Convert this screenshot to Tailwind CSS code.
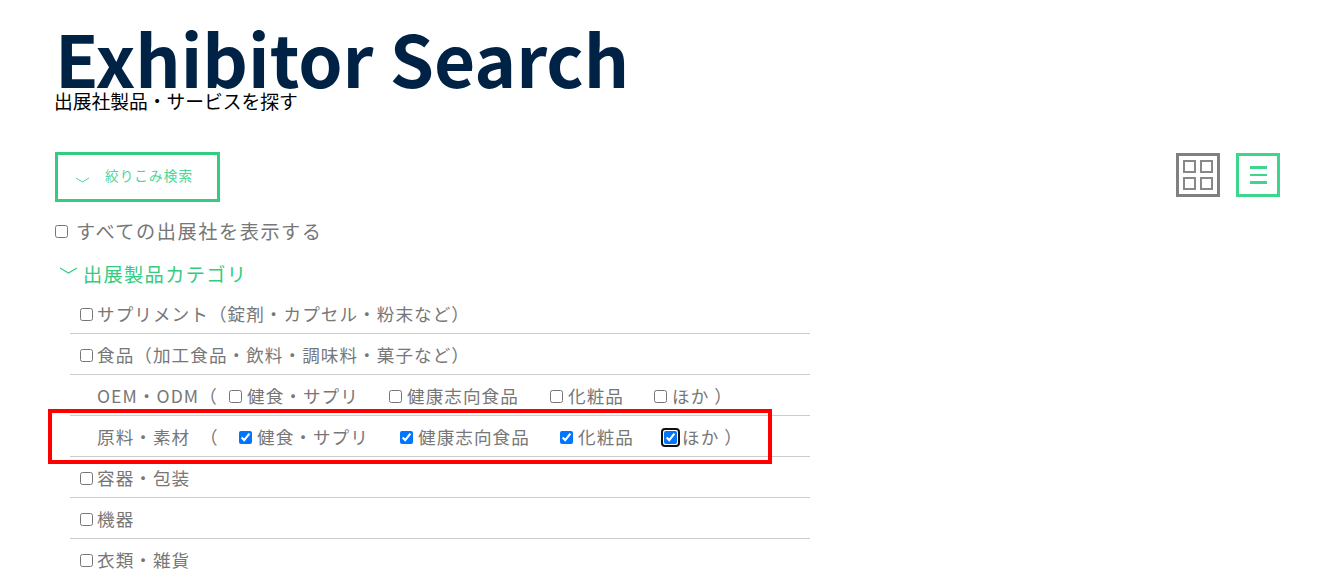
<!DOCTYPE html>
<html lang="ja">
<head>
  <meta charset="UTF-8" />
  <meta name="viewport" content="width=device-width, initial-scale=1.0" />
  <script src="https://cdn.jsdelivr.net/npm/@tailwindcss/browser@4"></script>
  <title>Exhibitor Search</title>
</head>
<body class="bg-white h-[578px] overflow-hidden font-['Noto_Sans_CJK_JP','Noto_Sans',sans-serif] text-[#777]">
  <div class="pl-[55px] pr-[63px]">
    <!-- Heading -->
    <h1 class="pt-[11px] h-[90px] text-[71px] leading-[92px] font-bold text-[#002345]">Exhibitor Search</h1>
    <p class="-ml-[1px] text-[18.75px] leading-[22px] text-black">出展社製品・サービスを探す</p>

    <!-- Toolbar -->
    <div class="mt-[40px] flex items-start justify-between">
      <button class="w-[165px] h-[50px] border-[3px] border-[#33cc80] flex items-center pl-[17px] text-[#4fd596] text-[13.6px] tracking-[0.08em]">
        <svg class="mt-[5px]" width="15" height="6" viewBox="0 0 15 6" fill="none" stroke="#4fd596" stroke-width="1"><path d="M1 1l6.5 4L14 1" /></svg>
        <span class="ml-[15px] mb-[4px]">絞りこみ検索</span>
      </button>
      <div class="mt-[1px] flex gap-[16px]">
        <div class="w-[44px] h-[44px] border-[3px] border-[#808080] grid grid-cols-2 gap-[4px] p-[4px]">
          <span class="border-2 border-[#888]"></span>
          <span class="border-2 border-[#888]"></span>
          <span class="border-2 border-[#888]"></span>
          <span class="border-2 border-[#888]"></span>
        </div>
        <div class="w-[44px] h-[44px] border-[3px] border-[#3dd68c] flex flex-col items-center justify-center gap-[5px]">
          <span class="w-[17px] h-[2.5px] bg-[#3dd68c]"></span>
          <span class="w-[17px] h-[2.5px] bg-[#3dd68c]"></span>
          <span class="w-[17px] h-[2.5px] bg-[#3dd68c]"></span>
        </div>
      </div>
    </div>

    <label class="mt-[14px] flex items-center h-[30px] text-[19.2px] tracking-[0.08em]">
      <input type="checkbox" class="m-0 mr-[8px] w-[13px] h-[13px]" />すべての出展社を表示する
    </label>

    <div class="mt-[13px] flex items-center h-[30px] text-[#33cc80] text-[19.2px] tracking-[0.07em]">
      <svg class="ml-[4px] mr-[5px] mb-[6px]" width="19" height="8" viewBox="0 0 19 8" fill="none" stroke="#33cc80" stroke-width="1.2"><path d="M1 1l8.5 5L18 1" /></svg>
      出展製品カテゴリ
    </div>

    <!-- Category rows -->
    <ul class="mt-[4px] ml-[15px] w-[740px] text-[17.6px] tracking-[0.06em]">
      <li class="h-[41px] pt-[2px] border-b border-[#ccc] flex items-center pl-[10px]"><input type="checkbox" class="m-0 mr-[4px]" />サプリメント（錠剤・カプセル・粉末など）</li>
      <li class="h-[41px] pt-[2px] border-b border-[#ccc] flex items-center pl-[10px]"><input type="checkbox" class="m-0 mr-[4px]" />食品（加工食品・飲料・調味料・菓子など）</li>
      <li class="h-[41px] pt-[2px] border-b border-[#ccc] flex items-center pl-[27px]">
        <span class="w-[132px]">OEM・ODM（</span>
        <input type="checkbox" class="m-0 mr-[5px]" /><span class="w-[142px]">健食・サプリ</span>
        <input type="checkbox" class="m-0 mr-[5px]" /><span class="w-[143px]">健康志向食品</span>
        <input type="checkbox" class="m-0 mr-[5px]" /><span class="w-[86px]">化粧品</span>
        <input type="checkbox" class="m-0 mr-[5px]" /><span>ほか ）</span>
      </li>
      <li class="relative h-[41px] pt-[2px] border-b border-[#ccc] flex items-center pl-[27px]">
        <span class="w-[142px]">原料・素材　（</span>
        <input type="checkbox" checked class="m-0 mr-[5px]" /><span class="w-[143px]">健食・サプリ</span>
        <input type="checkbox" checked class="m-0 mr-[5px]" /><span class="w-[142px]">健康志向食品</span>
        <input type="checkbox" checked class="m-0 mr-[5px]" /><span class="w-[86px]">化粧品</span>
        <input type="checkbox" checked autofocus class="m-0 mr-[5px]" /><span>ほか ）</span>
        <div class="absolute left-[-22px] top-[-7px] w-[724px] h-[55px] border-4 border-[#f00]"></div>
      </li>
      <li class="h-[41px] pt-[2px] border-b border-[#ccc] flex items-center pl-[10px]"><input type="checkbox" class="m-0 mr-[4px]" />容器・包装</li>
      <li class="h-[41px] pt-[2px] border-b border-[#ccc] flex items-center pl-[10px]"><input type="checkbox" class="m-0 mr-[4px]" />機器</li>
      <li class="h-[41px] pt-[2px] flex items-center pl-[10px]"><input type="checkbox" class="m-0 mr-[4px]" />衣類・雑貨</li>
    </ul>
  </div>
</body>
</html>
